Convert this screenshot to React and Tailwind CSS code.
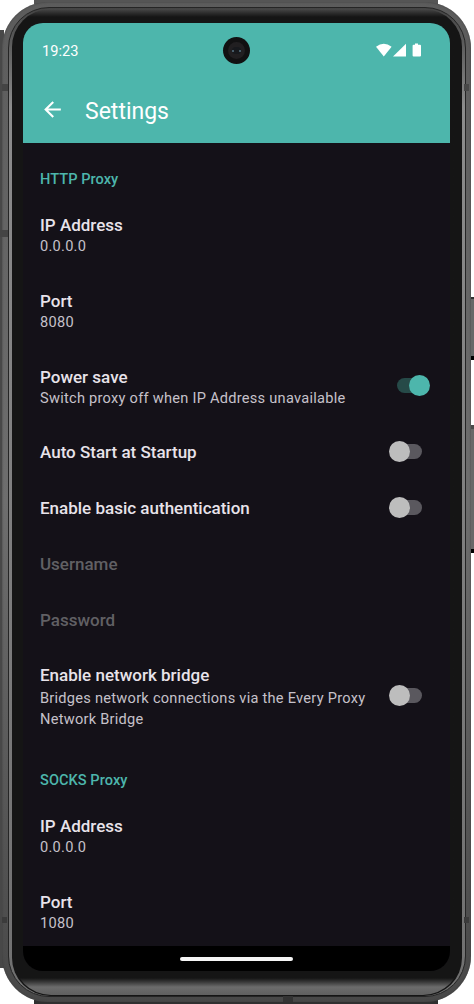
function Toggle({ on }) {
  if (on) {
    return (
      <div className="relative mb-[4px] h-[21px] w-[42px] shrink-0">
        <div className="absolute left-[9px] top-[3px] h-[15px] w-[25px] rounded-full bg-[#264a48]" />
        <div className="absolute left-[21px] top-0 size-[21px] rounded-full bg-[#4db6ac]" />
      </div>
    );
  }
  return (
    <div className="relative mb-[3px] h-[21px] w-[42px] shrink-0">
      <div className="absolute left-[8px] top-[3px] h-[15px] w-[26px] rounded-full bg-[#5a585e]" />
      <div className="absolute left-px top-0 size-[21px] rounded-full bg-[#bdbdbd]" />
    </div>
  );
}

function Title({ children, disabled, raised }) {
  return (
    <div className={`text-[17px] leading-[22px] font-medium ${disabled ? "text-[#616064]" : "text-[#e8e3ea]"} ${raised ? "pb-[2px] leading-[20px]" : ""}`}>
      {children}
    </div>
  );
}

function Row({ title, lines, toggle, disabled, height = "h-[76px]" }) {
  return (
    <div className={`flex shrink-0 items-center justify-between pl-[17px] pr-[20px] ${height}`}>
      <div>
        <Title disabled={disabled} raised={lines?.length !== 1}>{title}</Title>
        {lines?.map((l) => (
          <div key={l} className="text-[14.6px] leading-[21px] tracking-[0.26px] whitespace-nowrap text-[#c6c1ca]">{l}</div>
        ))}
      </div>
      {toggle && <Toggle on={toggle === "on"} />}
    </div>
  );
}

function Section({ children, className }) {
  return (
    <div className={`shrink-0 pl-[17px] text-[14.6px] leading-[20px] font-medium tracking-[0.04px] text-[#4db6ac] ${className}`}>{children}</div>
  );
}

export default function App() {
  return (
    <div className="relative h-[1004px] w-[474px] overflow-hidden bg-white font-['Roboto',sans-serif]">
      <div className="absolute left-0 top-[30px] h-[938px] w-1 bg-[#484848]" />
      <div className="absolute left-[34px] top-0 h-1 w-[404px] bg-[#555555]" />
      <div className="absolute left-[34px] bottom-0 h-1 w-[404px] bg-[#303030]" />
      <div className="absolute left-[470px] top-[297px] h-[63px] w-1 border-t-2 border-b-4 border-t-[#303030] border-b-black bg-[#686868]" />
      <div className="absolute left-[470px] top-[425px] h-[128px] w-1 border-t-4 border-b-4 border-t-[#4a4a4a] border-b-black bg-[#686868]" />

      <div className="relative ml-[2px] h-[1002px] w-[469px] pt-[2px]">
        <div className="h-[1000px] rounded-[46px] bg-linear-to-b from-[#5c5c5c] via-[#6e6e6e] to-[#484848] py-[5px] pl-[6px] pr-[5px] shadow-[inset_0_0_2px_0_#3a3a3a]">
          <div className="h-[990px] rounded-[41px] border border-[#252525] bg-linear-to-b from-[#444] via-[#8c8c8c] via-10% to-[#707070] px-[3px] pt-px">
            <div className="h-[987px] rounded-[38px] bg-linear-to-b from-[#484848] via-[#151515] via-[8px] to-[#151515] px-[11px] pt-[14px]">
              <div className="absolute bottom-[7px] left-[11px] h-[60px] w-[448px] rounded-b-[38px] bg-linear-to-b from-[#151515] from-[43px] via-[#6c6c6c] via-[52px] to-[#606060]" />
              <div className="relative flex h-[948px] w-[427px] flex-col overflow-hidden rounded-[20px] bg-[#141118]">
                <header className="relative h-[120px] shrink-0 bg-[#4db6ac] text-white">
                  <div className="flex h-[55px] items-center justify-between pl-[19px] pr-[28px]">
                    <span className="text-[14.6px] leading-[20px]">19:23</span>
                    <svg className="mb-px h-[14px] w-[46px]" viewBox="0 0 46 14" fill="white">
                      <path d="M0 3.800Q7.800-2.300 15.600 3.800L7.800 13.500Z" />
                      <path d="M17 13.500L30 .700V13.500Z" />
                      <path d="M39 .500h3v1.300h2q1 0 1 1v9.700q0 1-1 1h-6.400q-1 0-1-1V2.800q0-1 1-1H39Z" />
                    </svg>
                  </div>
                  <div className="flex h-[65px] items-center pl-[17px]">
                    <svg className="mb-[2px] size-[25px]" viewBox="0 0 24 24" fill="white">
                      <path d="M20 11H7.830l5.590-5.590L12 4l-8 8 8 8 1.410-1.410L7.830 13H20v-2z" />
                    </svg>
                    <h1 className="pt-[2px] pl-[20px] text-[23px] leading-[28px]">Settings</h1>
                  </div>
                  <div className="absolute left-[200px] top-[14px] flex size-[27px] items-center justify-center rounded-full bg-[#111112]">
                    <div className="flex size-[17px] items-center justify-center rounded-full bg-[#211f21]">
                      <div className="flex h-[7px] w-[9px] items-center justify-between rounded-full bg-[#17191d]">
                        <span className="size-[2px] rounded-full bg-[#587585]" />
                        <span className="size-[2px] rounded-full bg-[#587585]" />
                      </div>
                    </div>
                  </div>
                </header>

                <main className="flex h-[803px] shrink-0 flex-col overflow-hidden">
                  <Section className="h-[54px] pt-[26px]">HTTP Proxy</Section>
                  <Row title="IP Address" lines={["0.0.0.0"]} />
                  <Row title="Port" lines={["8080"]} />
                  <Row title="Power save" lines={["Switch proxy off when IP Address unavailable"]} toggle="on" />
                  <Row title="Auto Start at Startup" toggle="off" height="h-[56px]" />
                  <Row title="Enable basic authentication" toggle="off" height="h-[56px]" />
                  <Row title="Username" disabled height="h-[56px]" />
                  <Row title="Password" disabled height="h-[55px]" />
                  <Row title="Enable network bridge" lines={["Bridges network connections via the Every Proxy", "Network Bridge"]} toggle="off" height="h-[97px]" />
                  <Section className="h-[53px] pt-[25px]">SOCKS Proxy</Section>
                  <Row title="IP Address" lines={["0.0.0.0"]} />
                  <Row title="Port" lines={["1080"]} />
                </main>

                <footer className="flex h-[25px] shrink-0 items-center justify-center bg-black">
                  <div className="h-[4px] w-[113px] rounded-full bg-[#f5f5f5]" />
                </footer>
              </div>
            </div>
          </div>
        </div>
      </div>

      <div className="absolute left-[2px] top-[84px] h-[7px] w-[6px] bg-[#444]" />
      <div className="absolute left-0 top-[230px] h-[7px] w-[8px] bg-[#444]" />
      <div className="absolute left-[2px] top-[917px] h-[6px] w-[5px] bg-[#3b3b3b]" />
      <div className="absolute left-[464px] top-[84px] h-[7px] w-[5px] bg-[#484848]" />
      <div className="absolute left-[464px] top-[917px] h-[6px] w-[5px] bg-[#3b3b3b]" />
      <div className="absolute left-[283px] top-[996px] h-[6px] w-[10px] bg-[#333]" />
    </div>
  );
}
